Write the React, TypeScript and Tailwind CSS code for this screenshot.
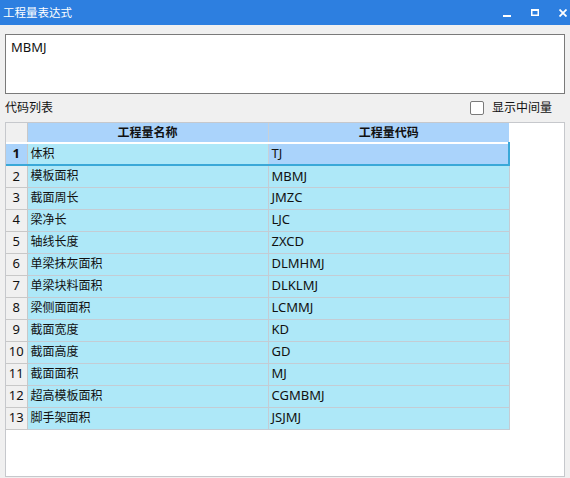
const rows: [string, string][] = [
  ["体积", "TJ"],
  ["模板面积", "MBMJ"],
  ["截面周长", "JMZC"],
  ["梁净长", "LJC"],
  ["轴线长度", "ZXCD"],
  ["单梁抹灰面积", "DLMHMJ"],
  ["单梁块料面积", "DLKLMJ"],
  ["梁侧面面积", "LCMMJ"],
  ["截面宽度", "KD"],
  ["截面高度", "GD"],
  ["截面面积", "MJ"],
  ["超高模板面积", "CGMBMJ"],
  ["脚手架面积", "JSJMJ"],
];

const font = { fontFamily: '"Noto Sans", "Noto Sans CJK SC", sans-serif' };

export default function App() {
  return (
    <div className="w-[570px] h-[478px] bg-[#f0f0f0] flex flex-col text-[12px] text-[#111]" style={font}>
      {/* title bar */}
      <div className="h-[25px] bg-[#2d7fe0] flex items-center justify-between pl-[3px] shrink-0">
        <span className="text-white text-[11.5px]">工程量表达式</span>
        <div className="flex items-center gap-[20px] pr-[3px]">
          <svg width="8" height="8" viewBox="0 0 8 8" className="mt-[3px]">
            <rect x="0" y="5" width="8" height="2" fill="white" />
          </svg>
          <svg width="8" height="7" viewBox="0 0 8 7">
            <rect x="0.75" y="0.75" width="6.5" height="5.5" fill="none" stroke="white" strokeWidth="1.5" />
            <rect x="0" y="0" width="8" height="2" fill="white" />
          </svg>
          <svg width="8" height="8" viewBox="0 0 8 8">
            <path d="M0.5 0.5 L7.5 7.5 M7.5 0.5 L0.5 7.5" stroke="white" strokeWidth="1.8" />
          </svg>
        </div>
      </div>

      <div className="mx-[5px] mt-[9px] h-[60px] bg-white border border-[#7a7a7a] px-[5px] pt-[3px] text-[13px] shrink-0">
        MBMJ
      </div>

      <div className="flex items-center justify-between h-[28px] px-[5px] shrink-0">
        <span>代码列表</span>
        <label className="flex items-center gap-[8px] mr-[13px]">
          <span className="w-[14px] h-[14px] bg-white border border-[#7a7a7a] rounded-[2px]" />
          <span>显示中间量</span>
        </label>
      </div>

      <div className="mx-[5px] h-[355px] bg-white border border-[#c6c8cc] shrink-0 overflow-hidden">
        <table className="border-collapse table-fixed">
          <colgroup>
            <col className="w-[21px]" />
            <col className="w-[241px]" />
            <col className="w-[241px]" />
          </colgroup>
          <thead>
            <tr className="h-[20px]">
              <th className="bg-[#f0f0f0] border-r border-[#c8c8c8] p-0" />
              <th className="bg-[#aad3fb] border-r border-[#c8d0d8] font-bold p-0 text-center">工程量名称</th>
              <th className="bg-[#aad3fb] font-bold p-0 text-center">工程量代码</th>
            </tr>
          </thead>
          <tbody>
            {rows.map(([name, code], i) => {
              const sel = i === 0;
              return (
                <tr key={code} className="h-[22px]">
                  <td
                    className={
                      sel
                        ? "bg-[#aad3fb] border-t-2 border-t-white border-b-2 border-b-[#3aa8d8] border-r border-r-[#c8c8c8] text-center font-bold text-[13px] p-0"
                        : "bg-[#f0f0f0] border-t border-b border-[#c8c8c8] border-r border-r-[#c8c8c8] text-center text-[13px] p-0"
                    }
                  >
                    {i + 1}
                  </td>
                  <td
                    className={
                      sel
                        ? "bg-[#aee8f8] border-t-2 border-t-white border-b-2 border-b-[#3aa8d8] border-r border-r-[#c8d0d8] px-[3px]"
                        : "bg-[#aee8f8] border-t border-b border-[#c4ccd4] border-r border-r-[#c4ccd4] px-[3px]"
                    }
                  >
                    {name}
                  </td>
                  <td
                    className={
                      sel
                        ? "bg-[#aad3fb] border-t-2 border-t-white border-b-2 border-b-[#3aa8d8] border-r-2 border-r-[#3aa8d8] px-[3px] text-[13px]"
                        : "bg-[#aee8f8] border-t border-b border-[#c4ccd4] border-r border-r-[#c4ccd4] px-[3px] text-[13px]"
                    }
                  >
                    {code}
                  </td>
                </tr>
              );
            })}
          </tbody>
        </table>
      </div>
    </div>
  );
}
